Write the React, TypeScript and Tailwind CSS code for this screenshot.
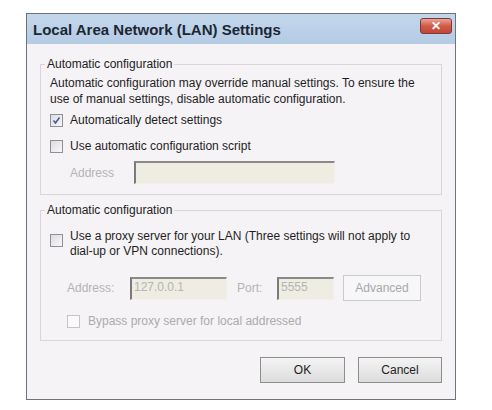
import React from "react";

const font = { fontFamily: '"Liberation Sans", Arial, sans-serif' };

function Check({ checked, disabled }: { checked?: boolean; disabled?: boolean }) {
  return (
    <span
      className={
        "flex h-[13px] w-[13px] shrink-0 items-center justify-center border " +
        (disabled ? "border-[#c4c4c8] bg-[#fafafa]" : "border-[#8f8f98] bg-gradient-to-br from-[#dcdce0] to-[#f8f8fa]")
      }
    >
      {checked && (
        <svg width="9" height="9" viewBox="0 0 9 9">
          <path d="M1.5 4.5 L3.5 7 L7.5 1.5" fill="none" stroke="#4a5a9c" strokeWidth="1.6" />
        </svg>
      )}
    </span>
  );
}

function Field({ className, value }: { className: string; value?: string }) {
  return (
    <div
      className={
        "border-l-2 border-t-2 border-r border-b border-l-[#7a7a7a] border-t-[#8a8a8a] border-r-[#f0f0f0] border-b-[#f0f0f0] bg-[#efece2] pl-[2px] text-[12px] leading-[16px] text-[#b4b4b4] " +
        className
      }
    >
      {value}
    </div>
  );
}

function Button({ label, className }: { label: string; className: string }) {
  return (
    <div
      className={
        "flex items-center justify-center border border-[#8e8e8e] bg-gradient-to-b from-[#f4f4f4] to-[#dcdcdc] text-[12px] text-[#222] " +
        className
      }
    >
      {label}
    </div>
  );
}

export default function App() {
  return (
    <div className="h-[410px] w-[492px] bg-white pl-[26px] pt-[13px]" style={font}>
      <div className="flex h-[387px] w-[430px] flex-col border border-[#6f7378] bg-[#f5f3f6]">
        {/* title bar */}
        <div className="flex h-[30px] items-center justify-between bg-gradient-to-b from-[#c4d7ec] to-[#b4cbe4] pl-[6px] pr-[3px]">
          <span className="mt-[3px] text-[15px] font-bold text-[#1b2733]">Local Area Network (LAN) Settings</span>
          <span className="mb-[7px] flex h-[16px] w-[32px] items-center justify-center rounded-[3px] border border-[#7c3a36] bg-gradient-to-b from-[#e8a497] via-[#cf5a46] to-[#c0463a] text-[12px] font-bold leading-none text-white">
            ✕
          </span>
        </div>

        <div className="flex flex-col px-[13px] pt-[11px]">
          {/* group 1 */}
          <fieldset className="h-[140px] border border-[#d9d5d9] px-[9px]">
            <legend className="ml-[-5px] px-[2px] text-[12px] text-[#222]">Automatic configuration</legend>
            <p className="mt-[2px] text-[12px] leading-[16px] text-[#1e1e1e]">
              Automatic configuration may override manual settings. To ensure the use of manual settings, disable automatic configuration.
            </p>
            <div className="mt-[4px] flex items-center gap-[7px] text-[12px] text-[#1e1e1e]">
              <Check checked />
              Automatically detect settings
            </div>
            <div className="mt-[8px] flex items-center gap-[7px] text-[12px] text-[#1e1e1e]">
              <Check />
              Use automatic configuration script
            </div>
            <div className="mt-[6px] flex items-center pl-[20px] text-[12px]">
              <span className="w-[64px] text-[#b4b4b4]">Address</span>
              <Field className="h-[23px] w-[201px]" />
            </div>
          </fieldset>

          {/* group 2 */}
          <fieldset className="mt-[6px] h-[140px] border border-[#d9d5d9] px-[9px]">
            <legend className="ml-[-5px] px-[2px] text-[12px] text-[#222]">Automatic configuration</legend>
            <div className="mt-[10px] flex items-start gap-[7px] text-[12px] leading-[15px] text-[#1e1e1e]">
              <span className="mt-[5px]">
                <Check />
              </span>
              <span>
                Use a proxy server for your LAN (Three settings will not apply to
                <br />
                dial-up or VPN connections).
              </span>
            </div>
            <div className="mt-[16px] flex items-center pl-[17px] text-[12px] text-[#b4b4b4]">
              <span className="w-[63px]">Address:</span>
              <Field className="h-[23px] w-[97px]" value="127.0.0.1" />
              <span className="ml-[10px] w-[40px]">Port:</span>
              <Field className="h-[23px] w-[57px]" value="5555" />
              <div className="ml-[9px] flex h-[26px] w-[78px] items-center justify-center border border-[#c9c9c9] bg-[#f7f6f8] text-[12px] text-[#a8a8a8]">
                Advanced
              </div>
            </div>
            <div className="mt-[11px] flex items-center gap-[8px] pl-[17px] text-[12px] text-[#ababab]">
              <Check disabled />
              Bypass proxy server for local addressed
            </div>
          </fieldset>

          {/* buttons */}
          <div className="mt-[16px] flex justify-end gap-[13px]">
            <Button label="OK" className="h-[26px] w-[85px]" />
            <Button label="Cancel" className="h-[26px] w-[84px]" />
          </div>
        </div>
      </div>
    </div>
  );
}
